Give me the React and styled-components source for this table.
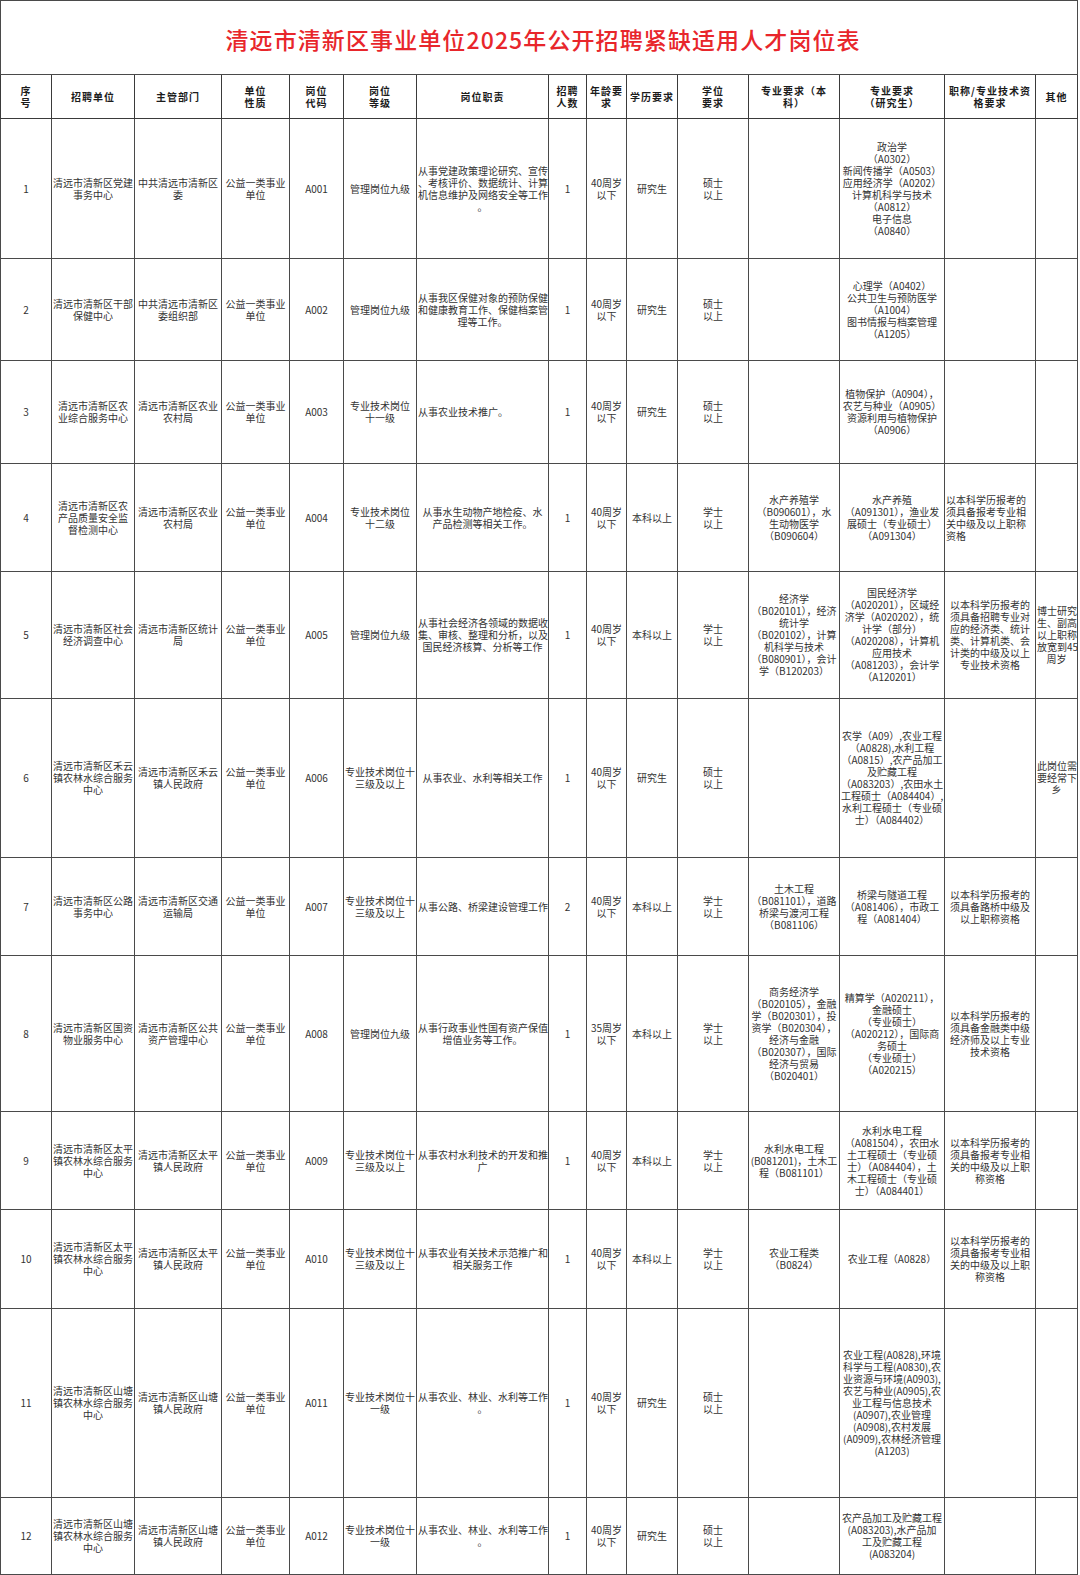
import React from "react";
import styled, { createGlobalStyle } from "styled-components";

const GlobalStyle = createGlobalStyle`
  html, body {
    margin: 0;
    padding: 0;
    background: #ffffff;
  }
  body {
    font-family: "Noto Sans CJK SC", "DejaVu Sans", sans-serif;
    color: #2a2a2a;
  }
`;

// column widths, left to right
const columnWidths = [51, 83, 87, 68, 54, 73, 132, 38, 40, 51, 71, 91, 105, 91, 42];

const headers = [
  "序\n号",
  "招聘单位",
  "主管部门",
  "单位\n性质",
  "岗位\n代码",
  "岗位\n等级",
  "岗位职责",
  "招聘\n人数",
  "年龄要\n求",
  "学历要求",
  "学位\n要求",
  "专业要求（本\n科）",
  "专业要求\n（研究生）",
  "职称/专业技术资\n格要求",
  "其他",
];

const UNIT = "公益一类事业\n单位";
const AGE40 = "40周岁\n以下";
const MASTER = "硕士\n以上";
const BACHELOR = "学士\n以上";

const rows = [
  {
    h: 140,
    cells: [
      "1",
      "清远市清新区党建\n事务中心",
      "中共清远市清新区\n委",
      UNIT,
      "A001",
      "管理岗位九级",
      "从事党建政策理论研究、宣传\n、考核评价、数据统计、计算\n机信息维护及网络安全等工作\n。",
      "1",
      AGE40,
      "研究生",
      MASTER,
      "",
      "政治学\n（A0302）\n新闻传播学（A0503）\n应用经济学（A0202）\n计算机科学与技术\n（A0812）\n电子信息\n（A0840）",
      "",
      "",
    ],
  },
  {
    h: 102,
    cells: [
      "2",
      "清远市清新区干部\n保健中心",
      "中共清远市清新区\n委组织部",
      UNIT,
      "A002",
      "管理岗位九级",
      "从事我区保健对象的预防保健\n和健康教育工作、保健档案管\n理等工作。",
      "1",
      AGE40,
      "研究生",
      MASTER,
      "",
      "心理学（A0402）\n公共卫生与预防医学\n（A1004）\n图书情报与档案管理\n（A1205）",
      "",
      "",
    ],
  },
  {
    h: 103,
    left: [6],
    cells: [
      "3",
      "清远市清新区农\n业综合服务中心",
      "清远市清新区农业\n农村局",
      UNIT,
      "A003",
      "专业技术岗位\n十一级",
      "从事农业技术推广。",
      "1",
      AGE40,
      "研究生",
      MASTER,
      "",
      "植物保护（A0904），\n农艺与种业（A0905）\n资源利用与植物保护\n（A0906）",
      "",
      "",
    ],
  },
  {
    h: 108,
    left: [13],
    cells: [
      "4",
      "清远市清新区农\n产品质量安全监\n督检测中心",
      "清远市清新区农业\n农村局",
      UNIT,
      "A004",
      "专业技术岗位\n十二级",
      "从事水生动物产地检疫、水\n产品检测等相关工作。",
      "1",
      AGE40,
      "本科以上",
      BACHELOR,
      "水产养殖学\n（B090601），水\n生动物医学\n（B090604）",
      "水产养殖\n（A091301），渔业发\n展硕士（专业硕士）\n（A091304）",
      "以本科学历报考的\n须具备报考专业相\n关中级及以上职称\n资格",
      "",
    ],
  },
  {
    h: 127,
    cells: [
      "5",
      "清远市清新区社会\n经济调查中心",
      "清远市清新区统计\n局",
      UNIT,
      "A005",
      "管理岗位九级",
      "从事社会经济各领域的数据收\n集、审核、整理和分析，以及\n国民经济核算、分析等工作",
      "1",
      AGE40,
      "本科以上",
      BACHELOR,
      "经济学\n（B020101），经济\n统计学\n（B020102），计算\n机科学与技术\n（B080901），会计\n学（B120203）",
      "国民经济学\n（A020201），区域经\n济学（A020202），统\n计学（部分）\n（A020208），计算机\n应用技术\n（A081203），会计学\n（A120201）",
      "以本科学历报考的\n须具备招聘专业对\n应的经济类、统计\n类、计算机类、会\n计类的中级及以上\n专业技术资格",
      "博士研究\n生、副高\n以上职称\n放宽到45\n周岁",
    ],
  },
  {
    h: 159,
    cells: [
      "6",
      "清远市清新区禾云\n镇农林水综合服务\n中心",
      "清远市清新区禾云\n镇人民政府",
      UNIT,
      "A006",
      "专业技术岗位十\n三级及以上",
      "从事农业、水利等相关工作",
      "1",
      AGE40,
      "研究生",
      MASTER,
      "",
      "农学（A09）,农业工程\n（A0828),水利工程\n（A0815）,农产品加工\n及贮藏工程\n（A083203）,农田水土\n工程硕士（A084404）,\n水利工程硕士（专业硕\n士）（A084402）",
      "",
      "此岗位需\n要经常下\n乡",
    ],
  },
  {
    h: 98,
    cells: [
      "7",
      "清远市清新区公路\n事务中心",
      "清远市清新区交通\n运输局",
      UNIT,
      "A007",
      "专业技术岗位十\n三级及以上",
      "从事公路、桥梁建设管理工作",
      "2",
      AGE40,
      "本科以上",
      BACHELOR,
      "土木工程\n（B081101），道路\n桥梁与渡河工程\n（B081106）",
      "桥梁与隧道工程\n（A081406），市政工\n程（A081404）",
      "以本科学历报考的\n须具备路桥中级及\n以上职称资格",
      "",
    ],
  },
  {
    h: 156,
    cells: [
      "8",
      "清远市清新区国资\n物业服务中心",
      "清远市清新区公共\n资产管理中心",
      UNIT,
      "A008",
      "管理岗位九级",
      "从事行政事业性国有资产保值\n增值业务等工作。",
      "1",
      "35周岁\n以下",
      "本科以上",
      BACHELOR,
      "商务经济学\n（B020105），金融\n学（B020301），投\n资学（B020304），\n经济与金融\n（B020307），国际\n经济与贸易\n（B020401）",
      "精算学（A020211），\n金融硕士\n（专业硕士）\n（A020212），国际商\n务硕士\n（专业硕士）\n（A020215）",
      "以本科学历报考的\n须具备金融类中级\n经济师及以上专业\n技术资格",
      "",
    ],
  },
  {
    h: 98,
    cells: [
      "9",
      "清远市清新区太平\n镇农林水综合服务\n中心",
      "清远市清新区太平\n镇人民政府",
      UNIT,
      "A009",
      "专业技术岗位十\n三级及以上",
      "从事农村水利技术的开发和推\n广",
      "1",
      AGE40,
      "本科以上",
      BACHELOR,
      "水利水电工程\n(B081201)，土木工\n程（B081101）",
      "水利水电工程\n（A081504），农田水\n土工程硕士（专业硕\n士）（A084404），土\n木工程硕士（专业硕\n士）（A084401）",
      "以本科学历报考的\n须具备报考专业相\n关的中级及以上职\n称资格",
      "",
    ],
  },
  {
    h: 99,
    cells: [
      "10",
      "清远市清新区太平\n镇农林水综合服务\n中心",
      "清远市清新区太平\n镇人民政府",
      UNIT,
      "A010",
      "专业技术岗位十\n三级及以上",
      "从事农业有关技术示范推广和\n相关服务工作",
      "1",
      AGE40,
      "本科以上",
      BACHELOR,
      "农业工程类\n（B0824）",
      "农业工程（A0828）",
      "以本科学历报考的\n须具备报考专业相\n关的中级及以上职\n称资格",
      "",
    ],
  },
  {
    h: 189,
    cells: [
      "11",
      "清远市清新区山塘\n镇农林水综合服务\n中心",
      "清远市清新区山塘\n镇人民政府",
      UNIT,
      "A011",
      "专业技术岗位十\n一级",
      "从事农业、林业、水利等工作\n。",
      "1",
      AGE40,
      "研究生",
      MASTER,
      "",
      "农业工程(A0828),环境\n科学与工程(A0830),农\n业资源与环境(A0903),\n农艺与种业(A0905),农\n业工程与信息技术\n(A0907),农业管理\n(A0908),农村发展\n(A0909),农林经济管理\n(A1203)",
      "",
      "",
    ],
  },
  {
    h: 77,
    cells: [
      "12",
      "清远市清新区山塘\n镇农林水综合服务\n中心",
      "清远市清新区山塘\n镇人民政府",
      UNIT,
      "A012",
      "专业技术岗位十\n一级",
      "从事农业、林业、水利等工作\n。",
      "1",
      AGE40,
      "研究生",
      MASTER,
      "",
      "农产品加工及贮藏工程\n(A083203),水产品加\n工及贮藏工程\n(A083204)",
      "",
      "",
    ],
  },
];

const App = () => {
  return (
    <>
      <GlobalStyle />
      <Page>
        <Sheet>
          <colgroup>
            {columnWidths.map((w, i) => (
              <col key={i} style={{ width: w }} />
            ))}
          </colgroup>
          <tbody>
            <TitleRow>
              <TitleCell colSpan={columnWidths.length}>
                清远市清新区事业单位2025年公开招聘紧缺适用人才岗位表
              </TitleCell>
            </TitleRow>
            <HeaderRow>
              {headers.map((label, i) => (
                <HeadCell key={i}>{label}</HeadCell>
              ))}
            </HeaderRow>
            {rows.map((row, r) => (
              <BodyRow key={r} $h={row.h}>
                {row.cells.map((text, c) => (
                  <Cell key={c} $left={row.left && row.left.includes(c)}>
                    {text}
                  </Cell>
                ))}
              </BodyRow>
            ))}
          </tbody>
        </Sheet>
      </Page>
    </>
  );
};

const Page = styled.div`
  width: 1080px;
`;

const Sheet = styled.table`
  width: 1078px;
  border-collapse: collapse;
  table-layout: fixed;
  font-size: 10px;
  line-height: 12px;
`;

const TitleRow = styled.tr`
  height: 74px;
`;

const TitleCell = styled.td`
  border: 1px solid #4a4a4a;
  text-align: center;
  vertical-align: middle;
  color: #e8262b;
  font-size: 23px;
  line-height: 28px;
  font-weight: 500;
  letter-spacing: 1.1px;
  padding: 3px 0 0 8px;
`;

const HeaderRow = styled.tr`
  height: 44px;
`;

const HeadCell = styled.td`
  border: 1px solid #3a3a3a;
  text-align: center;
  vertical-align: middle;
  white-space: pre;
  font-weight: 700;
  color: #1c1c1c;
  padding: 0;
  letter-spacing: 1px;
  overflow: hidden;
`;

const BodyRow = styled.tr`
  height: ${(p) => p.$h}px;
`;

const Cell = styled.td`
  border: 1px solid #4a4a4a;
  text-align: ${(p) => (p.$left ? "left" : "center")};
  vertical-align: middle;
  white-space: pre;
  padding: 0 1px;
  color: #333;
  overflow: visible;
`;

export default App;
